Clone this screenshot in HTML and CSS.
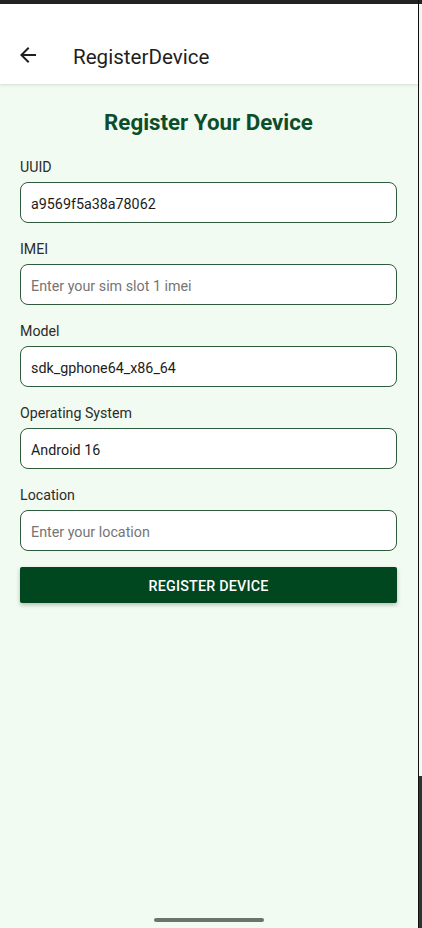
FILE: index.html
```html
<!DOCTYPE html>
<html lang="en">
<head>
<meta charset="utf-8">
<title>RegisterDevice</title>
<link rel="stylesheet" href="styles.css">
</head>
<body>
<div class="screen">
  <div class="app">
    <div class="statusbar"></div>
    <header class="appbar">
      <svg class="back" width="24" height="24" viewBox="0 0 24 24" aria-hidden="true">
        <path d="M20 11H7.83l5.59-5.59L12 4l-8 8 8 8 1.41-1.41L7.83 13H20v-2z" fill="#1f1f1f"/>
      </svg>
      <span class="appbar-title">RegisterDevice</span>
    </header>
    <main class="content">
      <h1 class="title">Register Your Device</h1>
      <div class="field">
        <label class="label">UUID</label>
        <div class="input">a9569f5a38a78062</div>
      </div>
      <div class="field">
        <label class="label">IMEI</label>
        <div class="input placeholder">Enter your sim slot 1 imei</div>
      </div>
      <div class="field">
        <label class="label">Model</label>
        <div class="input">sdk_gphone64_x86_64</div>
      </div>
      <div class="field">
        <label class="label">Operating System</label>
        <div class="input">Android 16</div>
      </div>
      <div class="field">
        <label class="label">Location</label>
        <div class="input placeholder">Enter your location</div>
      </div>
      <button class="btn">REGISTER DEVICE</button>
      <div class="spacer"></div>
      <div class="home-indicator"></div>
    </main>
  </div>
  <div class="edge">
    <div class="edge-top"></div>
    <div class="edge-bottom"></div>
  </div>
</div>
</body>
</html>
```

FILE: styles.css
```css
* { box-sizing: border-box; }
html, body {
  margin: 0;
  padding: 0;
  height: 928px;
  overflow: hidden;
  font-family: Roboto, "Noto Sans", Arial, sans-serif;
}
.screen {
  display: flex;
  width: 422px;
  height: 928px;
}
.app {
  width: 418px;
  height: 928px;
  display: flex;
  flex-direction: column;
  background: #f1fbf1;
}
.statusbar {
  height: 4px;
  background: #222222;
  flex: none;
}
.appbar {
  height: 80px;
  flex: none;
  background: #ffffff;
  display: flex;
  align-items: flex-end;
  padding: 0 0 16px 16px;
  box-shadow: 0 1px 3px rgba(0,0,0,0.12);
  position: relative;
  z-index: 1;
}
.back {
  display: block;
  margin-bottom: 1px;
}
.appbar-title {
  margin-left: 33px;
  font-size: 20.6px;
  color: #1f1f1f;
  line-height: 26px;
  margin-bottom: -2px;
}
.content {
  flex: 1;
  display: flex;
  flex-direction: column;
  padding: 24px 21px 0 20px;
}
.title {
  margin: 0 0 22px;
  text-align: center;
  font-size: 22.3px;
  line-height: 28px;
  font-weight: 700;
  color: #0c4d2a;
}
.field {
  display: flex;
  flex-direction: column;
  margin-bottom: 17px;
}
.label {
  font-size: 14.2px;
  line-height: 18px;
  color: #2b2b2b;
  margin-bottom: 6px;
  font-weight: 400;
}
.input {
  height: 41px;
  border: 1px solid #2f5c3c;
  border-radius: 8px;
  background: #ffffff;
  padding: 2px 10px 0;
  display: flex;
  align-items: center;
  font-size: 14.3px;
  color: #1c1c1c;
}
.placeholder {
  color: #757575;
}
.btn {
  margin-top: -1px;
  height: 36px;
  border: 0;
  border-radius: 2px;
  background: #00461f;
  color: #ffffff;
  font-family: Roboto, "Noto Sans", Arial, sans-serif;
  font-size: 14.3px;
  font-weight: 500;
  letter-spacing: 0.2px;
  padding-top: 3px;
  box-shadow: 0 2px 4px rgba(0,0,0,0.25);
}
.spacer { flex: 1; }
.home-indicator {
  align-self: center;
  width: 110px;
  height: 4px;
  border-radius: 2px;
  background: #6b736b;
  margin: 0 0 6px 1px;
}
.edge {
  width: 4px;
  height: 928px;
  display: flex;
  flex-direction: column;
  border-left: 1px solid #111111;
}
.edge-top {
  height: 776px;
  background: #f7f7f7;
  border-top: 4px solid #222222;
}
.edge-bottom {
  flex: 1;
  background: #333333;
}
```
